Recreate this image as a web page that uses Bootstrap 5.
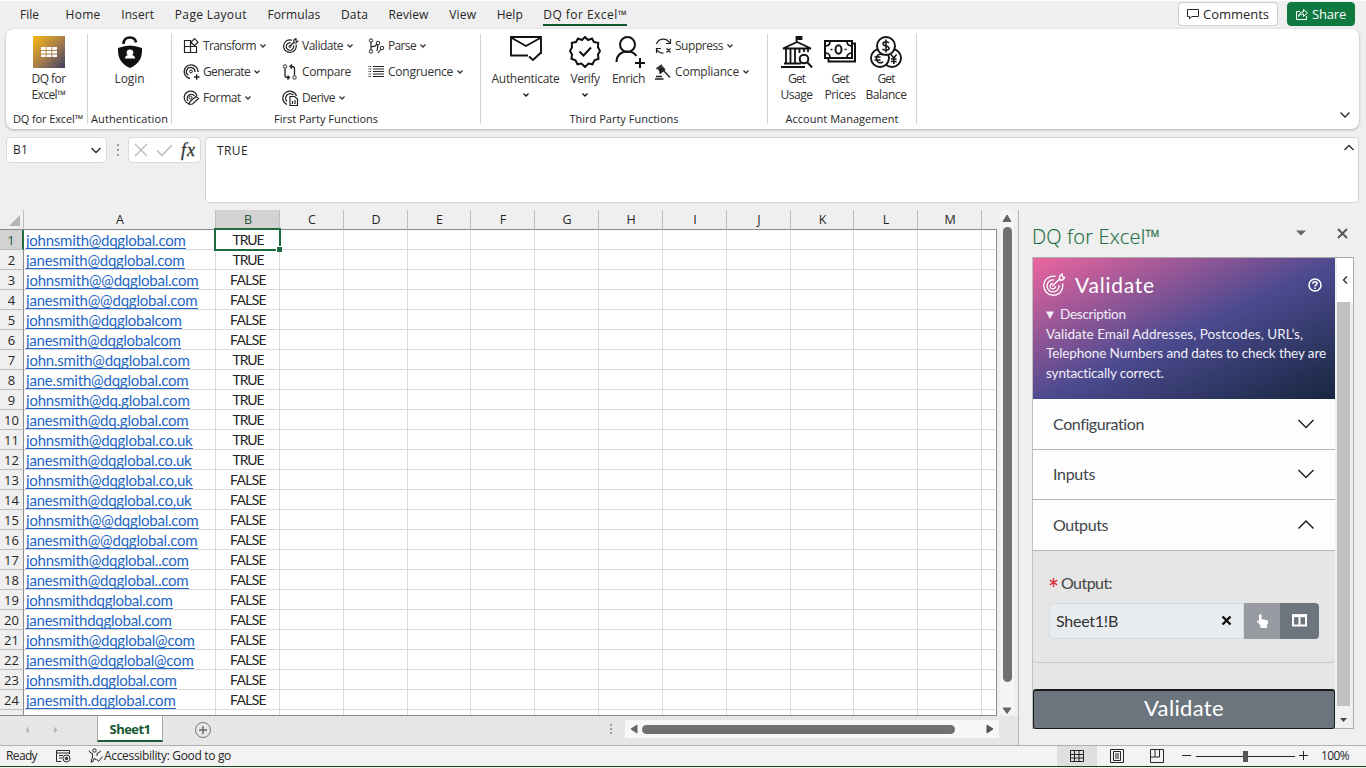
<!DOCTYPE html>
<html lang="en">
<head>
<meta charset="utf-8">
<meta name="viewport" content="width=device-width, initial-scale=1">
<title>DQ for Excel</title>
<link href="https://cdn.jsdelivr.net/npm/bootstrap@5.3.0/dist/css/bootstrap.min.css" rel="stylesheet">
<style>
body{width:1366px;height:768px;overflow:hidden;background:#efefef;border-top:1px solid #fff;font-family:"Open Sans","Noto Sans",sans-serif;font-size:12px;line-height:16px;color:#262626}
svg{display:block;flex:none;fill:none;stroke:currentColor}
[data-w]{display:inline-block;white-space:nowrap;flex:none}
.tabbar{height:28px;padding-left:20px;font-size:12px;gap:20.6px}
.tabbar .nav-link{padding:0;color:#262626;height:26px;line-height:27px}
.tabbar .first-tab{margin-right:6px}
.tabbar .active{border-bottom:2px solid #0e5a2b;height:25px;margin-bottom:1px}
.topactions{margin:1px 11px 0 auto;gap:9px}
.topbtn{height:24px;border-radius:4px;font-size:13px;line-height:22px;padding:0 8px;border:1px solid #d0d0d0;background:#fff;color:#262626}
.sharebtn{background:#10793f;border-color:#10793f;color:#fff}
.ribbon{margin:0 7px 0 6px;height:100px;border-radius:8px;background:#fff;box-shadow:0 1px 3px rgba(0,0,0,.28)}
.grp{height:90px;margin-top:5px;border-right:1px solid #d4d4d4}
.grpbody{height:77px}
.grplabel{line-height:16px;font-size:11px}
.bigbtn{padding:2px 0 0;font-size:12px;line-height:16px;color:#333}
.bigbtn svg{margin-bottom:3px;color:#111}
.smallcol{margin-top:-1px}
.smallbtn{height:26px;font-size:12px;color:#333}
.smallbtn svg:first-child{color:#222;margin-right:3px}
.smallbtn .chev{margin-left:3px}
.chev{stroke-width:1.300}
.formula{height:81px;padding:8px 7px 0 6px}
.fbox{background:#fff;border:1px solid #dadada;border-radius:4px;height:26px}
.fx{font:italic 18px "Liberation Serif",serif;line-height:22px;color:#333;-webkit-text-stroke:.3px #333}
.finput{height:66px;margin-left:4px;padding:4px 11px;border-color:#d4d4d4}
.work{height:535px}
.sheetside{width:1018px}
.xgrid{display:grid;grid-template-columns:24px 192px 64px 64px 64px 63px 64px 64px 64px 64px 64px 63px 64px 64px 15px;width:997px;height:506px;overflow:hidden;grid-template-rows:20px;grid-auto-rows:20px;align-content:start;border-bottom:1px solid #8a8a8a}
.xgrid>div{border-right:1px solid #dadada;border-bottom:1px solid #dadada;background:#fff;overflow:visible;line-height:20px;height:20px;white-space:nowrap}
.xgrid>.colhead{background:#efefef;border-right-color:#bdbdbd;border-bottom:1px solid #8a8a8a;font-size:12.5px;text-align:center;padding-left:1px}
.xgrid>.rowhead{background:#efefef;border-right-color:#8a8a8a;border-bottom-color:#bdbdbd;text-align:center;font-size:13px}
.xgrid>.lastcol{border-right-color:#8a8a8a}
.xgrid>.headpick{background:#d2d2d2;color:#1d5c38}
.xgrid>.rowpick{border-right:2px solid #1d6b3e;padding-right:0}
.mailcell{padding-left:2px;font-family:Lato,"Open Sans",sans-serif;font-size:15px;color:#1f66c4}
.mailcell span{line-height:16px;height:17px;border-bottom:1px solid #1f66c4;vertical-align:top;margin-top:2px}
.flagcell{text-align:center;font-family:Lato,"Open Sans",sans-serif;font-size:14px;color:#222;padding-left:1px}
.pickcell{position:relative}
.pickcell::before{content:"";position:absolute;left:-2px;top:-2px;width:67px;height:23px;border:2px solid #1d6b3e}
.pickcell::after{content:"";position:absolute;left:60px;top:16px;width:6px;height:6px;background:#1d6b3e;border:1px solid #fff;border-width:1px 0 0 1px}
.vscroll{width:14px;margin-left:3px;height:506px;background:#f5f5f5;border-radius:6px}
.vthumb{width:9px;height:455px;border-radius:5px;background:#707070}
.sheetbar{height:29px;background:#e6e6e6}
.sheettab{width:66px;height:26px;background:#fff;border-bottom:2px solid #1d5c38;border-left:1px solid #aaa;border-right:1px solid #aaa;color:#17572f;font-weight:700;font-size:13px;line-height:27px;text-align:center;margin-left:37px}
.hscroll{width:374px;height:18px;background:#f7f7f7;padding:0 5px}
.hthumb{width:313px;height:9px;border-radius:5px;background:#707070;margin-left:4px}
.pane{width:348px;border-left:1px solid #b5b5b5;padding-left:13px}
.panetitle{height:47px;color:#1e7145;font-size:20px;font-weight:400;padding-top:7px}
.panetitle span{font-weight:300;-webkit-text-stroke:.2px #1e7145}
.paneframe{width:322px;height:472px;border:1px solid #aaa;background:#e6e6e6;font-family:Lato,"Open Sans",sans-serif;border-left-color:#c0c0c0}
.panebody{width:302px}
.hero{height:141px;color:#fff;background:linear-gradient(155deg,#ec659f 0%,#4b4a8f 52%,#17263f 100%);padding:13px 8px 0 9px}
.herotitle{font-size:21px;line-height:28px}
.herotext{font-size:13.5px;line-height:19.7px;margin-left:4px;margin-top:6px;color:#f1eff8}
.accrow{height:50.6px;background:#fdfdfd;border-bottom:1px solid #b5b5b5;padding:0 20px;font-size:16px;color:#3f4448}
.accbody{height:112px;border-bottom:1px solid #c8c8c8;border-radius:0 0 4px 4px;padding:21px 16px 0 16px;font-size:16px;color:#444}
.outlabel{height:22px;margin-bottom:9px}
.outfield{width:195px;height:36px;background:#e9ecef;border:1px solid #d5dade;padding-left:6px;font-size:16px;color:#333;border-radius:3px 0 0 3px}
.handbtn{width:36px;height:36px;background:#989ca2;color:#fff}
.colbtn{width:39px;height:36px;background:#6c757d;color:#fff;border-radius:0 4px 4px 0}
.runbtn{height:40px;margin:26px 0 0 0;width:302px;background:#6c757d;border:2px solid #181b1e;border-width:2px 1px 1px 1px;border-radius:3px;color:#fff;font-size:22px;line-height:32px;text-align:center;padding:0 0 3px}
.panescroll{width:18px;background:#f0f0f0;padding-left:2px}
.flybtn{width:16px;height:44px;background:#fff;color:#222}
.pthumb{width:13px;height:404px;background:#c1c1c1}
.statusbar{height:22px;background:#f3f3f3;border-top:1px solid #b0b0b0;border-bottom:1px solid #17451f;font-size:12px;color:#262626;padding-bottom:1px}
.viewpick{width:40px;height:20px;background:#dfdfdf}
</style>
</head>
<body>
<nav class="nav tabbar flex-nowrap align-items-start">
  <a class="nav-link first-tab" data-w="19">File</a><a class="nav-link" data-w="35">Home</a><a class="nav-link" data-w="33">Insert</a><a class="nav-link" data-w="72">Page Layout</a><a class="nav-link" data-w="53">Formulas</a><a class="nav-link" data-w="27">Data</a><a class="nav-link" data-w="40">Review</a><a class="nav-link" data-w="27">View</a><a class="nav-link" data-w="26">Help</a><a class="nav-link active" data-w="84">DQ for Excel™</a>
  <div class="d-flex topactions">
    <div class="topbtn d-flex align-items-center gap-1"><svg width="12" height="12" viewBox="0 0 12 12"><path d="M.5 1.500h11v7H5L2.500 10.800V8.500H.5z"/></svg><span data-w="66">Comments</span></div>
    <div class="topbtn sharebtn d-flex align-items-center gap-1"><svg width="12" height="12" viewBox="0 0 12 12"><path d="M4 3.500H.5v8h10V8M2.500 8.500c.3-3 2-4.500 5-4.500V1.500l4 3.500-4 3.500V6C5.500 6 3.800 6.500 2.500 8.500z"/></svg><span data-w="34">Share</span></div>
  </div>
</nav>

<section class="ribbon d-flex">
  <div class="grp text-center" style="width:82px">
    <div class="grpbody ps-1">
      <div class="bigbtn d-flex flex-column align-items-center"><svg width="32" height="32" viewBox="0 0 32 32"><defs><linearGradient id="gold" x1="0" y1="0" x2="1" y2="1"><stop offset="0" stop-color="#fdb713"/><stop offset=".55" stop-color="#a17a4c"/><stop offset="1" stop-color="#3d3f66"/></linearGradient></defs><path stroke="none" fill="url(#gold)" d="M0 0h32v32H0z"/><path stroke="none" fill="#fff" d="M8 11h4.700v3H8zm5.600 0h4.800v3h-4.800zm5.700 0H24v3h-4.700zM8 14.900h4.700v2.600H8zm5.600 0h4.800v2.600h-4.800zm5.700 0H24v2.600h-4.700zM8 18.400h4.700V21H8zm5.600 0h4.800V21h-4.800zm5.700 0H24V21h-4.700z"/></svg><span data-w="34">DQ for</span><span data-w="34">Excel™</span></div>
    </div>
    <div class="grplabel" style="padding-left:3px"><span data-w="70">DQ for Excel™</span></div>
  </div>
  <div class="grp text-center" style="width:84px">
    <div class="grpbody">
      <div class="bigbtn d-flex flex-column align-items-center"><svg width="32" height="32" viewBox="0 0 32 32"><path d="M9.500 8C9.500 3 12.500 1.500 16 1.500s5.500 1.500 6 5" stroke-width="2.600"/><path d="M16 9.500q5.500 0 12 2.500c.5 10-3 16-12 20C7 28 3.500 22 4 12q6.500-2.500 12-2.500z" fill="currentColor" stroke="none"/><path d="M16 13.500a3 3 0 0 1 2 5.500c2 .5 3 1.500 3 3.500H11c0-2 1-3 3-3.500a3 3 0 0 1 2-5.500z" fill="#fff" stroke="none"/></svg><span data-w="30">Login</span></div>
    </div>
    <div class="grplabel"><span data-w="77">Authentication</span></div>
  </div>
  <div class="grp text-center" style="width:309px">
    <div class="grpbody d-flex" style="padding-left:11px">
      <div class="smallcol" style="width:99px">
        <div class="smallbtn d-flex align-items-center"><svg width="17" height="16" viewBox="0 0 17 16"><path d="M1.500 2.500h6v6h-6zM1.500 8.500h6v6h-6zM7.500 8.500h6v6h-6zM11.500.7L15 4.200l-3.500 3.500L8 4.200z" stroke-width="1.200"/></svg><span data-w="53">Transform</span><svg class="chev" width="8" height="6" viewBox="0 0 8 6"><path d="M1.500 1.500L4 4l2.500-2.500"/></svg></div>
        <div class="smallbtn d-flex align-items-center"><svg width="17" height="16" viewBox="0 0 17 16"><path d="M7 14.500A6.900 6.900 0 1 1 15 8M5.500 11.500A4.300 4.300 0 1 1 12 8M11 13h5.500M13.700 10.300v5.500" stroke-width="1.300"/><circle cx="8" cy="7.500" r="1.400"/></svg><span data-w="47">Generate</span><svg class="chev" width="8" height="6" viewBox="0 0 8 6"><path d="M1.500 1.500L4 4l2.500-2.500"/></svg></div>
        <div class="smallbtn d-flex align-items-center"><svg width="17" height="16" viewBox="0 0 17 16"><path d="M7 14A6.500 6.500 0 1 1 14 6M5 11A4 4 0 1 1 11.500 6M7 11.500l6-5 2.500 2-6 5.500-3.500.5z" stroke-width="1.200"/><circle cx="7.500" cy="7.500" r="1.500"/></svg><span data-w="38">Format</span><svg class="chev" width="8" height="6" viewBox="0 0 8 6"><path d="M1.500 1.500L4 4l2.500-2.500"/></svg></div>
      </div>
      <div class="smallcol" style="width:86px">
        <div class="smallbtn d-flex align-items-center"><svg width="17" height="16" viewBox="0 0 17 16"><path d="M10 2.200A6.300 6.300 0 1 0 14 6.500M9 5a3.700 3.700 0 1 0 2.500 2.500M7.800 8.500l4-4V2L14 .5V3l2 .2L14 5h-2.500" stroke-width="1.200"/><circle cx="7.800" cy="8.500" r="1"/></svg><span data-w="41">Validate</span><svg class="chev" width="8" height="6" viewBox="0 0 8 6"><path d="M1.500 1.500L4 4l2.500-2.500"/></svg></div>
        <div class="smallbtn d-flex align-items-center"><svg width="17" height="16" viewBox="0 0 17 16"><circle cx="3" cy="2.500" r="1.700"/><circle cx="12.500" cy="13.500" r="1.700"/><path d="M3 4.500v7q0 2 2.500 2H7M5.500 11.500l2 2-2 2M12.500 11.500V4.500q0-2-2.500-2H8.500M10 .5l-2 2 2 2" stroke-width="1.300"/></svg><span data-w="49">Compare</span></div>
        <div class="smallbtn d-flex align-items-center"><svg width="17" height="16" viewBox="0 0 17 16"><path d="M5 14.500A7 7 0 1 1 14.500 6M5 11.500A4.500 4.500 0 1 1 11.500 5M8 15.500v-9h4.500L15.500 9v6.500zM10.500 14v-3M13 14v-4" stroke-width="1.200"/></svg><span data-w="33">Derive</span><svg class="chev" width="8" height="6" viewBox="0 0 8 6"><path d="M1.500 1.500L4 4l2.500-2.500"/></svg></div>
      </div>
      <div class="smallcol">
        <div class="smallbtn d-flex align-items-center"><svg width="17" height="16" viewBox="0 0 17 16"><circle cx="3" cy="2.500" r="1.700"/><circle cx="3" cy="13.500" r="1.700"/><circle cx="10" cy="5" r="1.800"/><circle cx="14" cy="10" r="1.800"/><path d="M3 4v8M3 8.500q5 .5 5.500-2.300M10 7l-1 6M12.700 11.500L10 15" stroke-width="1.200"/></svg><span data-w="28">Parse</span><svg class="chev" width="8" height="6" viewBox="0 0 8 6"><path d="M1.500 1.500L4 4l2.500-2.500"/></svg></div>
        <div class="smallbtn d-flex align-items-center"><svg width="17" height="16" viewBox="0 0 17 16"><path d="M5 2.500h11M5 5h11M5 7.500h11M5 10h11M5 12.500h11"/><path d="M.5 2.500h3M.5 5h3M.5 7.500h3M.5 10h3M.5 12.500h3" stroke-dasharray="1 .6"/></svg><span data-w="65">Congruence</span><svg class="chev" width="8" height="6" viewBox="0 0 8 6"><path d="M1.500 1.500L4 4l2.500-2.500"/></svg></div>
      </div>
    </div>
    <div class="grplabel"><span data-w="104">First Party Functions</span></div>
  </div>
  <div class="grp text-center" style="width:287px">
    <div class="grpbody d-flex" style="padding-left:8px">
      <div class="bigbtn d-flex flex-column align-items-center" style="width:73px"><svg width="34" height="32" viewBox="0 0 34 32"><path d="M19 19.500H2V1h30v17M2 1.500L17 10 32 1.500M20 20.500l4 3.500 7.500-7" stroke-width="1.900"/></svg><span data-w="68">Authenticate</span><svg class="chev" style="margin-top:5px" width="8" height="6" viewBox="0 0 8 6"><path d="M1.500 1.500L4 4l2.500-2.500"/></svg></div>
      <div class="bigbtn d-flex flex-column align-items-center" style="width:46px"><svg width="32" height="32" viewBox="0 0 32 32"><path d="M16 1l3 3 4-1.500 2 3.500 4.200.8-.2 4.400L31 15l-2 3.500.5 4.300-4 1.500-2 4-4-.8L16 31l-3.500-3.500-4 .8-2-4-4-1.500.5-4.300L1 15l2-3.800-.2-4.400L7 6l2-3.500L13 4zM10.500 15.500l4 4 7.500-8" stroke-width="2"/></svg><span data-w="29">Verify</span><svg class="chev" style="margin-top:5px" width="8" height="6" viewBox="0 0 8 6"><path d="M1.500 1.500L4 4l2.500-2.500"/></svg></div>
      <div class="bigbtn d-flex flex-column align-items-center" style="width:41px"><svg width="32" height="32" viewBox="0 0 32 32"><circle cx="14.500" cy="8.500" r="7.500" stroke-width="2"/><path d="M3.500 26c0-7 5-10.500 11-10.500 4 0 7 1.500 9 4.500M27 22v10M22 27h10" stroke-width="2"/></svg><span data-w="33">Enrich</span></div>
      <div class="smallcol" style="margin-left:6px">
        <div class="smallbtn d-flex align-items-center"><svg width="17" height="16" viewBox="0 0 17 16"><path d="M1.500 6A7 7 0 0 1 14.500 5M15.500 1v4.500H11M1.500 15v-4.500H6M1.500 11a7 7 0 0 0 7 4M11.500 10.500l4 4M15.500 10.500l-4 4" stroke-width="1.200"/></svg><span data-w="48">Suppress</span><svg class="chev" width="8" height="6" viewBox="0 0 8 6"><path d="M1.500 1.500L4 4l2.500-2.500"/></svg></div>
        <div class="smallbtn d-flex align-items-center"><svg width="17" height="16" viewBox="0 0 17 16"><path d="M1.500 5L7 1M4.500 9.500L10 5" stroke-width="1.700"/><path d="M3.500 5L7.500 2.500 9 5 5 8z" fill="currentColor"/><path d="M8.500 6.500L15 13.500M1 12.500h6M0 15h8.500" stroke-width="1.400"/></svg><span data-w="64">Compliance</span><svg class="chev" width="8" height="6" viewBox="0 0 8 6"><path d="M1.500 1.500L4 4l2.500-2.500"/></svg></div>
      </div>
    </div>
    <div class="grplabel"><span data-w="109">Third Party Functions</span></div>
  </div>
  <div class="grp text-center" style="width:149px">
    <div class="grpbody d-flex" style="padding-left:7px">
      <div class="bigbtn d-flex flex-column align-items-center" style="width:43px"><svg width="32" height="32" viewBox="0 0 32 32"><path d="M15.500 6V1h5v2h-4M2 12.500h28L16 6zM0 31h24M3 27.500h17M5 13v14M9.500 13v14M14 13v14M18.500 13v4M23 13v3M27 13v3" stroke-width="1.800"/><circle cx="23" cy="23" r="4.300" fill="#fff" stroke-width="2"/><path d="M26.500 26.500l4.500 5" stroke-width="2"/></svg><span data-w="17">Get</span><span data-w="32">Usage</span></div>
      <div class="bigbtn d-flex flex-column align-items-center" style="width:44px"><svg width="32" height="32" viewBox="0 0 32 32"><path d="M1 5h27v17H1zM29 7.500h2V25.500H4.500V23" stroke-width="2"/><path d="M2 10q4-.5 4-4.500M23 5.500q0 4 4.500 4.500M2 17q4 .5 4 4.500M23 21.500q0-4 4.500-4.500M6.500 13.500h2M20.500 13.500h2" stroke-width="1.700"/><ellipse cx="14.500" cy="13.500" rx="3" ry="4.300" stroke-width="2"/></svg><span data-w="17">Get</span><span data-w="31">Prices</span></div>
      <div class="bigbtn d-flex flex-column align-items-center" style="width:48px"><svg width="32" height="32" viewBox="0 0 32 32"><g stroke-width="1.900"><circle cx="22" cy="22" r="9"/><circle cx="10" cy="22" r="9" fill="#fff"/><circle cx="16" cy="10" r="9" fill="#fff"/></g><path d="M19 7c-1-1.800-6-1.800-6 .8 0 3 6 1.500 6 4.500 0 2.600-5.500 2.600-6.500.5M16 3.500v13M13.500 19c-4-2-7 0-7 3.500s3 5.500 6.500 3.500M4.500 21h6M4.500 24h6M21 18.500l2.800 3.500 2.800-3.500M23.800 22v6M21 23h5.600M21 25.500h5.600" stroke-width="1.500"/></svg><span data-w="17">Get</span><span data-w="41">Balance</span></div>
    </div>
    <div class="grplabel"><span data-w="113">Account Management</span></div>
  </div>
  <svg class="ms-auto align-self-end" style="margin:0 8px 8px 0" width="12" height="12" viewBox="0 0 12 12"><path d="M1.500 3.500L6 8l4.500-4.500" stroke-width="1.300"/></svg>
</section>

<section class="formula d-flex align-items-start">
  <div class="fbox d-flex align-items-center justify-content-between pe-1" style="width:101px;padding-left:6px"><span data-w="15">B1</span><svg width="12" height="12" viewBox="0 0 12 12"><path d="M1.500 4L6 8.500 10.500 4" stroke-width="1.300"/></svg></div>
  <svg style="margin:7px 8px 0 9px" width="4" height="12" viewBox="0 0 4 12"><path d="M2 0v12" stroke="#999" stroke-width="2" stroke-dasharray="2 3"/></svg>
  <div class="fbox d-flex align-items-center" style="width:73px;padding-left:5px;gap:8px"><svg width="14" height="14" viewBox="0 0 14 14"><path d="M1 1l12 12M13 1L1 13" stroke="#bbb" stroke-width="1.300"/></svg><svg width="17" height="14" viewBox="0 0 17 14"><path d="M1 7.500l5 5L16 2" stroke="#bbb" stroke-width="1.500"/></svg><span class="fx" data-w="15">fx</span></div>
  <div class="fbox finput flex-grow-1 d-flex justify-content-between"><span data-w="31" style="margin-top:1px">TRUE</span><svg style="margin:0 -8px 0 0" width="12" height="12" viewBox="0 0 12 12"><path d="M1.500 8L6 3.500 10.500 8" stroke-width="1.300"/></svg></div>
</section>

<main class="work d-flex">
  <div class="sheetside">
    <div class="d-flex">
      <div class="xgrid" id="grid"></div>
      <div class="vscroll d-flex flex-column align-items-center">
        <svg width="10" height="17" viewBox="0 0 10 17"><path d="M5 5l4 6.500H1z" fill="#666" stroke="#666"/></svg>
        <div class="vthumb"></div>
        <svg class="mt-auto" width="10" height="15" viewBox="0 0 10 15"><path d="M5 12.500L9 7H1z" fill="#666" stroke="#666"/></svg>
      </div>
    </div>
    <div class="sheetbar d-flex">
      <svg style="margin:8px 0 0 24px" width="36" height="12" viewBox="0 0 36 12"><path d="M5 2.500v7L1.500 6zM30 2.500v7L33.500 6z" fill="#b8b8b8" stroke="none"/></svg>
      <div class="sheettab"><span data-w="41">Sheet1</span></div>
      <svg style="margin:5px 0 0 31px" width="18" height="18" viewBox="0 0 18 18"><circle cx="9" cy="9" r="7.500" stroke="#777"/><path d="M5 9h8M9 5v8" stroke="#666" stroke-width="1.400"/></svg>
      <svg class="ms-auto" style="margin:8px 12px 0 0" width="4" height="12" viewBox="0 0 4 12"><path d="M2 0v12" stroke="#999" stroke-width="2" stroke-dasharray="2 2"/></svg>
      <div class="hscroll d-flex align-items-center" style="margin:4px 19px 0 0"><svg width="8" height="10" viewBox="0 0 8 10"><path d="M7 1v8L1 5z" fill="#666" stroke="#666"/></svg><div class="hthumb"></div><svg class="ms-auto" width="8" height="10" viewBox="0 0 8 10"><path d="M1 1v8l6-4z" fill="#555" stroke="#555"/></svg></div>
    </div>
  </div>
  <aside class="pane">
    <div class="panetitle d-flex align-items-start"><span data-w="128" style="line-height:40px">DQ for Excel™</span>
      <svg style="margin:13px 31px 0 136px" width="10" height="6" viewBox="0 0 10 6"><path d="M0 .5h10L5 5.500z" fill="#666" stroke="none"/></svg>
      <svg style="margin-top:11px" width="11" height="11" viewBox="0 0 11 11"><path d="M1 1l9 9M10 1l-9 9" stroke="#555" stroke-width="1.900"/></svg></div>
    <div class="paneframe d-flex">
      <div class="panebody">
        <div class="hero">
          <div class="d-flex align-items-center">
            <svg width="23" height="24" viewBox="0 0 23 24"><g stroke-width="1.300"><path d="M13.500 3.500a9.500 9.500 0 1 0 7 7M12 7a6 6 0 1 0 5 5M10.500 13l7-7V3.500L20 1l.5 3 2.500.5L20.500 7H17"/><path d="M11 10.500a2.700 2.700 0 1 0 2.500 2.500"/></g></svg>
            <span class="herotitle" data-w="80" style="margin-left:10px">Validate</span>
            <svg class="ms-auto" style="margin-right:5px" width="14" height="14" viewBox="0 0 14 14"><circle cx="7" cy="7" r="6" stroke-width="1.500"/><path d="M4.800 5.800C5 3 9.200 3.200 9 5.500 9 7 7 6.800 7 8.500M7 9.500v1.500" stroke-width="1.600"/></svg>
          </div>
          <div class="herotext">
            <div class="d-flex align-items-center"><svg width="8" height="8" viewBox="0 0 8 8"><path d="M0 .5h8L4 8z" fill="currentColor" stroke="none"/></svg><span data-w="66" style="margin-left:6px">Description</span></div>
            <span data-w="257">Validate Email Addresses, Postcodes, URL’s,</span><br><span data-w="280">Telephone Numbers and dates to check they are</span><br><span data-w="118">syntactically correct.</span>
          </div>
        </div>
        <div class="accrow d-flex align-items-center justify-content-between"><span data-w="91">Configuration</span><svg width="18" height="12" viewBox="0 0 18 12"><path d="M1.500 2L9 9.500 16.500 2" stroke="#222" stroke-width="1.500"/></svg></div>
        <div class="accrow d-flex align-items-center justify-content-between"><span data-w="42">Inputs</span><svg width="18" height="12" viewBox="0 0 18 12"><path d="M1.500 2L9 9.500 16.500 2" stroke="#222" stroke-width="1.500"/></svg></div>
        <div class="accrow d-flex align-items-center justify-content-between"><span data-w="55">Outputs</span><svg width="18" height="12" viewBox="0 0 18 12"><path d="M1.500 9.500L9 2l7.500 7.500" stroke="#222" stroke-width="1.500"/></svg></div>
        <div class="accbody">
          <div class="outlabel d-flex align-items-center"><svg width="9" height="9" viewBox="0 0 9 9"><path d="M4.500 0v9M.8 2.200l7.400 4.600M8.200 2.200L.8 6.800" stroke="#dc3545" stroke-width="1.400"/></svg><span data-w="51" style="margin-left:3px">Output:</span></div>
          <div class="d-flex"><div class="outfield d-flex align-items-center justify-content-between"><span data-w="62">Sheet1!B</span><svg style="margin-right:11px" width="11" height="11" viewBox="0 0 11 11"><path d="M1.500 1.500l8 8M9.500 1.500l-8 8" stroke="#111" stroke-width="2.400"/></svg></div>
          <div class="handbtn d-flex align-items-center justify-content-center"><svg width="13" height="14" viewBox="0 0 13 14"><path d="M3 1.200C3 0 5.500 0 5.500 1.200V5l5.500 1.200q1.500.5 1 3L11 11v3H4.500v-2.500L1 7.500Q.8 6 3 7z" fill="currentColor" stroke="none"/></svg></div>
          <div class="colbtn d-flex align-items-center justify-content-center"><svg width="15" height="13" viewBox="0 0 15 13"><path d="M1 1.500h13v10H1zM7.500 1v11" stroke-width="2"/><path d="M0 1.700h15" stroke-width="3"/></svg></div></div>
        </div>
        <button class="runbtn d-block"><span data-w="80">Validate</span></button>
      </div>
      <div class="panescroll">
        <div class="flybtn d-flex align-items-center ps-1"><svg width="8" height="10" viewBox="0 0 8 10"><path d="M6 1.500L2.500 5 6 8.500" stroke-width="1.200"/></svg></div>
        <div class="pthumb"></div>
        <svg class="mt-2" style="margin-left:2px" width="9" height="12" viewBox="0 0 9 12"><path d="M1 4h7L4.500 8z" fill="#444" stroke="none"/></svg>
      </div>
    </div>
  </aside>
</main>

<footer class="statusbar d-flex align-items-center">
  <span data-w="31" style="margin-left:6px">Ready</span>
  <svg style="margin:0 17px 0 19px" width="15" height="14" viewBox="0 0 15 14"><path d="M5 12.500H.5v-11h13V5M.5 4h13M3 6.500h4M3 9h3"/><circle cx="10.500" cy="9.500" r="3.500"/><circle cx="10.500" cy="9.500" r="1.200" fill="currentColor"/></svg>
  <svg style="margin-right:1px" width="15" height="15" viewBox="0 0 15 15"><circle cx="6.500" cy="2.500" r="1.700"/><path d="M1 2.500q0 2 3.500 3V9L3 14h1.500L6.500 10l1 2M12.500 2.500q0 2-3.500 3V8M8.500 11l2 2.500 4-5"/></svg>
  <span data-w="127">Accessibility: Good to go</span>
  <div class="ms-auto viewpick d-flex align-items-center justify-content-center"><svg width="14" height="14" viewBox="0 0 14 14"><path d="M.5 1.500h13v11H.5zM.5 5.500h13M.5 9h13M4.500 1.500v11M9 1.500v11" stroke="#222"/></svg></div>
  <svg style="margin-left:13px" width="14" height="14" viewBox="0 0 14 14"><path d="M.5.5h13v13H.5zM3.500 2.500h7v9h-7zM5 5h4M5 7h4M5 9h4"/></svg>
  <svg style="margin-left:26px" width="14" height="14" viewBox="0 0 14 14"><path d="M.5.5h13v13H.5zM5 1v7M9.500 1v7M.5 8h9"/></svg>
  <svg style="margin-left:18px" width="127" height="14" viewBox="0 0 127 14"><path d="M0 6.500h9M14 7.500h99M117 6.500h9M121.500 2v9"/><path d="M61 2h5v11h-5z" fill="#555" stroke="none"/></svg>
  <span data-w="28" style="margin:0 17px 0 12px">100%</span>
</footer>

<script src="https://cdn.jsdelivr.net/npm/bootstrap@5.3.0/dist/js/bootstrap.bundle.min.js"></script>
<script>
// [address, result, text width]
const rows = [
["johnsmith@dqglobal.com",1,159.5],["janesmith@dqglobal.com",1,158.5],["johnsmith@@dqglobal.com",0,172.5],["janesmith@@dqglobal.com",0,171.5],
["johnsmith@dqglobalcom",0,155.5],["janesmith@dqglobalcom",0,154.5],["john.smith@dqglobal.com",1,163.5],["jane.smith@dqglobal.com",1,162.5],
["johnsmith@dq.global.com",1,163.5],["janesmith@dq.global.com",1,162.5],["johnsmith@dqglobal.co.uk",1,166.5],["janesmith@dqglobal.co.uk",1,165.5],
["johnsmith@dqglobal.co,uk",0,166.5],["janesmith@dqglobal.co,uk",0,165.5],["johnsmith@@dqglobal.com",0,172.5],["janesmith@@dqglobal.com",0,171.5],
["johnsmith@dqglobal..com",0,162.5],["janesmith@dqglobal..com",0,162.5],["johnsmithdqglobal.com",0,146.5],["janesmithdqglobal.com",0,145.5],
["johnsmith@dqglobal@com",0,168.5],["janesmith@dqglobal@com",0,167.5],["johnsmith.dqglobal.com",0,150.5],["janesmith.dqglobal.com",0,149.5]];
const blanks = '<div></div>'.repeat(11) + '<div class="lastcol"></div>';
let html = '<div class="colhead"><svg width="22" height="18" viewBox="0 0 22 18"><path d="M19 5v11H8z" fill="#b5b5b5" stroke="none"/></svg></div>';
for (const c of 'ABCDEFGHIJKLM') html += `<div class="colhead${c === 'B' ? ' headpick' : ''}">${c}</div>`;
html += '<div class="colhead border-end-0"></div>';
rows.forEach(([mail, ok, w], i) => {
  html += `<div class="rowhead${i ? '' : ' headpick rowpick'}">${i + 1}</div><div class="mailcell"><span data-w="${w}">${mail}</span></div>`
    + `<div class="flagcell${i ? '' : ' pickcell'}"><span data-w="${ok ? 31 : 36}">${ok ? 'TRUE' : 'FALSE'}</span></div>` + blanks;
});
html += '<div class="rowhead"></div><div></div><div></div>' + blanks;
document.getElementById('grid').innerHTML = html;

// set each label to its measured width by spacing its letters evenly
document.querySelectorAll('[data-w]').forEach(el => {
  const want = +el.dataset.w, have = el.getBoundingClientRect().width;
  el.style.letterSpacing = ((want - have) / el.textContent.length).toFixed(3) + 'px';
  el.style.width = want + 'px';
});
</script>
</body>
</html>
